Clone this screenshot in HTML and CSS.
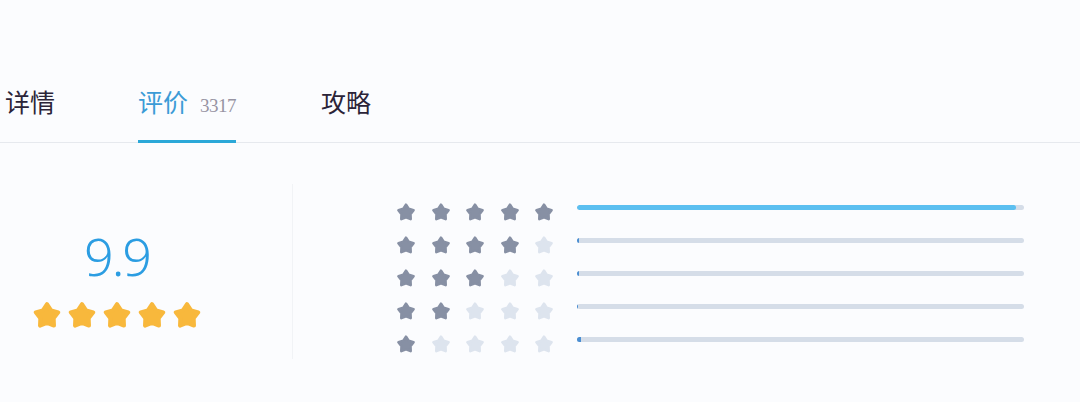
FILE: index.html
```html
<!DOCTYPE html>
<html>
<head>
    <title>评价</title>
    <link rel="stylesheet" href="styles.css">
</head>
<body>
    <svg class="defs" width="0" height="0">
        <symbol id="star" viewBox="0 0 24 24">
            <polygon points="12,3.3 15.29,8.27 21.04,9.86 17.33,14.53 17.58,20.49 12,18.4 6.42,20.49 6.67,14.53 2.96,9.86 8.71,8.27" fill="currentColor" stroke="currentColor" stroke-width="3.2" stroke-linejoin="round"/>
        </symbol>
    </svg>

    <div class="tabs">
        <div class="tab">详情</div>
        <div class="tab active">评价<span class="count">3317</span></div>
        <div class="tab">攻略</div>
    </div>

    <div class="rating">
        <div class="score-panel">
            <div class="score-box">
                <div class="score">9.9</div>
                <div class="gold-stars">
                    <svg><use href="#star"/></svg>
                    <svg><use href="#star"/></svg>
                    <svg><use href="#star"/></svg>
                    <svg><use href="#star"/></svg>
                    <svg><use href="#star"/></svg>
                </div>
            </div>
        </div>

        <div class="dist">
            <div class="dist-row">
                <div class="row-stars">
                    <svg class="on"><use href="#star"/></svg>
                    <svg class="on"><use href="#star"/></svg>
                    <svg class="on"><use href="#star"/></svg>
                    <svg class="on"><use href="#star"/></svg>
                    <svg class="on"><use href="#star"/></svg>
                </div>
                <div class="bar"><div class="fill main" style="width: 98.2%"></div></div>
            </div>
            <div class="dist-row">
                <div class="row-stars">
                    <svg class="on"><use href="#star"/></svg>
                    <svg class="on"><use href="#star"/></svg>
                    <svg class="on"><use href="#star"/></svg>
                    <svg class="on"><use href="#star"/></svg>
                    <svg><use href="#star"/></svg>
                </div>
                <div class="bar"><div class="fill" style="width: 2px"></div></div>
            </div>
            <div class="dist-row">
                <div class="row-stars">
                    <svg class="on"><use href="#star"/></svg>
                    <svg class="on"><use href="#star"/></svg>
                    <svg class="on"><use href="#star"/></svg>
                    <svg><use href="#star"/></svg>
                    <svg><use href="#star"/></svg>
                </div>
                <div class="bar"><div class="fill" style="width: 2px"></div></div>
            </div>
            <div class="dist-row">
                <div class="row-stars">
                    <svg class="on"><use href="#star"/></svg>
                    <svg class="on"><use href="#star"/></svg>
                    <svg><use href="#star"/></svg>
                    <svg><use href="#star"/></svg>
                    <svg><use href="#star"/></svg>
                </div>
                <div class="bar"><div class="fill" style="width: 1px"></div></div>
            </div>
            <div class="dist-row">
                <div class="row-stars">
                    <svg class="on"><use href="#star"/></svg>
                    <svg><use href="#star"/></svg>
                    <svg><use href="#star"/></svg>
                    <svg><use href="#star"/></svg>
                    <svg><use href="#star"/></svg>
                </div>
                <div class="bar"><div class="fill" style="width: 4px"></div></div>
            </div>
        </div>
    </div>
</body>
</html>
```

FILE: styles.css
```css
body {
    margin: 0;
    background: #fbfcfe;
    font-family: "Noto Sans CJK SC", "Noto Sans", sans-serif;
    color: #2b2438;
}
.defs {
    position: absolute;
}
.tabs {
    display: flex;
    gap: 83px;
    padding: 85px 0 0 5px;
    border-bottom: 1px solid #e6e9ee;
}
.tab {
    font-size: 25px;
    line-height: 32px;
    height: 32px;
    padding-bottom: 23px;
    border-bottom: 3px solid transparent;
    margin-bottom: -1px;
}
.tab.active {
    color: #3b9bd6;
    border-bottom-color: #2ba8d8;
    margin-right: 2px;
}
.count {
    font-family: "Liberation Serif", serif;
    font-size: 19px;
    color: #9794a3;
    letter-spacing: -0.5px;
    margin-left: 12px;
}
.rating {
    display: flex;
    padding-top: 41px;
}
.score-panel {
    margin-left: 17px;
    width: 275px;
    height: 175px;
    border-right: 1px solid #f1f3f6;
}
.score-box {
    width: 200px;
    text-align: center;
    padding-top: 42px;
}
.score {
    font-family: "Noto Sans", sans-serif;
    font-weight: 300;
    font-size: 52px;
    line-height: 60px;
    color: #2b9de2;
    letter-spacing: -2px;
}
.gold-stars {
    display: flex;
    justify-content: center;
    gap: 5px;
    margin-top: 14px;
}
.gold-stars svg {
    width: 30px;
    height: 30px;
    color: #f8b83c;
}
.dist {
    margin-left: 103px;
    padding-top: 11px;
}
.dist-row {
    display: flex;
    align-items: center;
    height: 33px;
}
.row-stars {
    display: flex;
    gap: 14.5px;
}
.row-stars svg {
    width: 20px;
    height: 20px;
    color: #dde4ee;
}
.row-stars svg.on {
    color: #8790a4;
}
.bar {
    width: 447px;
    height: 5px;
    margin-left: 23px;
    margin-top: -8px;
    background: #d5dde8;
    border-radius: 3px;
    overflow: hidden;
}
.fill {
    height: 100%;
    background: #4a8ed2;
}
.fill.main {
    background: #5bbff0;
    border-radius: 3px;
}
```
